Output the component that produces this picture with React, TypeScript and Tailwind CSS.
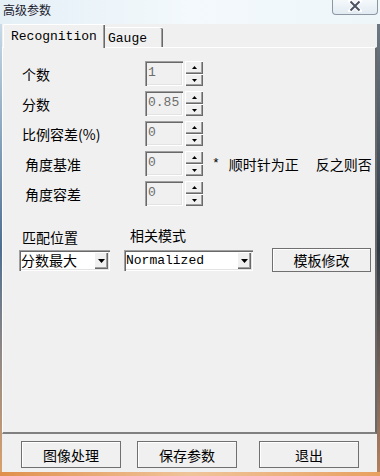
import React from "react";

const CJK = "font-['Noto_Sans_CJK_SC',sans-serif]";
const MONO = "font-['Liberation_Mono',monospace]";

const RAISED =
  "bg-[#f0f0f0] shadow-[inset_1px_1px_0_#ffffff,inset_-1px_-1px_0_#696969,inset_-2px_-2px_0_#a0a0a0]";
const SUNKEN =
  "shadow-[inset_1px_1px_0_#a0a0a0,inset_2px_2px_0_#696969,inset_-1px_-1px_0_#ffffff,inset_-2px_-2px_0_#e3e3e3]";

const Arrow = ({ up, w = 5, h = 3 }: { up?: boolean; w?: number; h?: number }) => (
  <svg width={w} height={h} viewBox={`0 0 ${w} ${h}`} className="block">
    <polygon
      points={up ? `0,${h} ${w},${h} ${w / 2},0` : `0,0 ${w},0 ${w / 2},${h}`}
      fill="#000"
    />
  </svg>
);

const SpinField = ({ value }: { value: string }) => (
  <div className="flex">
    <div
      className={`w-[38px] h-[25px] bg-[#f0f0f0] ${SUNKEN} ${MONO} text-[13px] leading-[18px] text-[#6d6d6d] pl-[3px] pt-[3px]`}
    >
      {value}
    </div>
    <div className="ml-[2px] flex flex-col w-[18px] h-[25px]">
      <div className={`h-[13px] ${RAISED} flex items-center justify-center pb-[1px]`}>
        <Arrow up />
      </div>
      <div className={`h-[12px] ${RAISED} flex items-center justify-center`}>
        <Arrow />
      </div>
    </div>
  </div>
);

const ParamRow = ({
  label,
  value,
  indent,
  note,
}: {
  label: string;
  value: string;
  indent: string;
  note?: boolean;
}) => (
  <div className="flex items-center h-[25px]">
    <div className={`w-[142px] ${indent} text-[14px] leading-[18px] text-black`}>{label}</div>
    <SpinField value={value} />
    {note && (
      <div className="flex items-center ml-[9px] text-[14px] leading-[18px] text-black">
        <span className={`${MONO} text-[13px]`}>*</span>
        <span className="ml-[9px]">顺时针为正</span>
        <span className="ml-[17px]">反之则否</span>
      </div>
    )}
  </div>
);

const Combo = ({ text, mono, width }: { text: string; mono?: boolean; width: string }) => (
  <div className={`${width} h-[21px] bg-white ${SUNKEN} flex items-center pl-[2px] pr-[2px]`}>
    <span
      className={`flex-1 text-black ${mono ? `${MONO} text-[13px]` : "text-[14px]"} leading-[17px]`}
    >
      {text}
    </span>
    <div className={`w-[14px] h-[17px] ${RAISED} flex items-center justify-center`}>
      <Arrow w={7} h={4} />
    </div>
  </div>
);

const PushButton = ({ label, className = "" }: { label: string; className?: string }) => (
  <button
    className={`border border-[#707070] bg-[#f0f0f0] shadow-[inset_1px_1px_0_#ffffff] text-[14px] leading-[18px] text-black flex items-center justify-center ${className}`}
  >
    {label}
  </button>
);

const CloseButton = () => (
  <div className="mr-[2px] w-[46px] h-[15px] rounded-b-[4px] border border-t-0 border-[#8d97a3] bg-gradient-to-b from-[#f4f8fb] to-[#e2ebf2] flex justify-center">
    <svg width="14" height="12" viewBox="0 0 14 12" className="mt-[0px]">
      <path d="M2 1 L12 11 M12 1 L2 11" stroke="#ffffff" strokeWidth="4" strokeLinecap="square" />
      <path d="M2.5 1.5 L11.5 10.5 M11.5 1.5 L2.5 10.5" stroke="#4b5262" strokeWidth="2" />
    </svg>
  </div>
);

export default function App() {
  return (
    <div className={`w-[380px] h-[476px] overflow-hidden flex flex-col bg-[#eef6fa] ${CJK}`}>
      {/* title bar */}
      <div className="h-[24px] flex items-start justify-between bg-gradient-to-r from-[#e4eff6] via-[#f3f9fc] to-[#eef6fa]">
        <span className="ml-[3px] mt-[2px] text-[12px] leading-[16px] text-[#1b1b2e]">高级参数</span>
        <CloseButton />
      </div>

      <div className="flex h-[448px]">
        <div className="w-[2px] bg-gradient-to-b from-[#c9dbe8] via-[#4d6f92] to-[#d9a06a]" />

        <div className="w-[375px] bg-[#f0f0f0] flex flex-col">
          {/* tabs */}
          <div className="h-[23px] flex items-end pl-[1px] relative z-10">
            <div
              className={`w-[102px] h-[24px] -mb-[1px] bg-[#f0f0f0] border-t border-l border-white rounded-tl-[2px] shadow-[inset_-1px_0_0_#696969,inset_-2px_0_0_#a0a0a0] ${MONO} text-[13px] leading-[18px] text-black pl-[7px] pt-[3px]`}
            >
              Recognition
            </div>
            <div
              className={`w-[58px] h-[20px] bg-[#f0f0f0] border-t border-white rounded-tr-[2px] shadow-[inset_-1px_0_0_#696969,inset_-2px_0_0_#a0a0a0] ${MONO} text-[13px] leading-[18px] text-black pl-[3px] pt-[2px]`}
            >
              Gauge
            </div>
          </div>

          {/* panel */}
          <div className="h-[387px] border-t border-l border-white border-r-2 border-r-[#696969] border-b-2 border-b-[#808080] flex flex-col pt-[13px]">
            <div className="flex flex-col gap-[5px]">
              <ParamRow label="个数" value="1" indent="pl-[19px]" />
              <ParamRow label="分数" value="0.85" indent="pl-[19px]" />
              <ParamRow label="比例容差(%)" value="0" indent="pl-[19px]" />
              <ParamRow label="角度基准" value="0" indent="pl-[22px]" note />
              <ParamRow label="角度容差" value="0" indent="pl-[22px]" />
            </div>

            <div className="flex items-end mt-[20px] pl-[16px]">
              <div className="flex flex-col">
                <span className="pl-[3px] text-[14px] leading-[18px] text-black">匹配位置</span>
                <div className="mt-[4px]">
                  <Combo text="分数最大" width="w-[91px]" />
                </div>
              </div>
              <div className="flex flex-col ml-[14px]">
                <span className="pl-[6px] text-[14px] leading-[18px] text-black">相关模式</span>
                <div className="mt-[6px]">
                  <Combo text="Normalized" mono width="w-[129px]" />
                </div>
              </div>
              <PushButton label="模板修改" className="ml-[19px] w-[99px] h-[24px] -mb-[1px]" />
            </div>
          </div>

          {/* footer */}
          <div className="flex pt-[7px] pl-[19px]">
            <PushButton label="图像处理" className="w-[100px] h-[27px]" />
            <PushButton label="保存参数" className="ml-[16px] w-[100px] h-[27px]" />
            <PushButton label="退出" className="ml-[22px] w-[100px] h-[27px]" />
          </div>
        </div>

        <div className="w-[3px] bg-gradient-to-b from-[#6c7884] via-[#2f3a46] to-[#b08060]" />
      </div>

      <div className="h-[4px] bg-gradient-to-r from-[#e0904c] via-[#f0c49a] to-[#e8a060]" />
    </div>
  );
}
